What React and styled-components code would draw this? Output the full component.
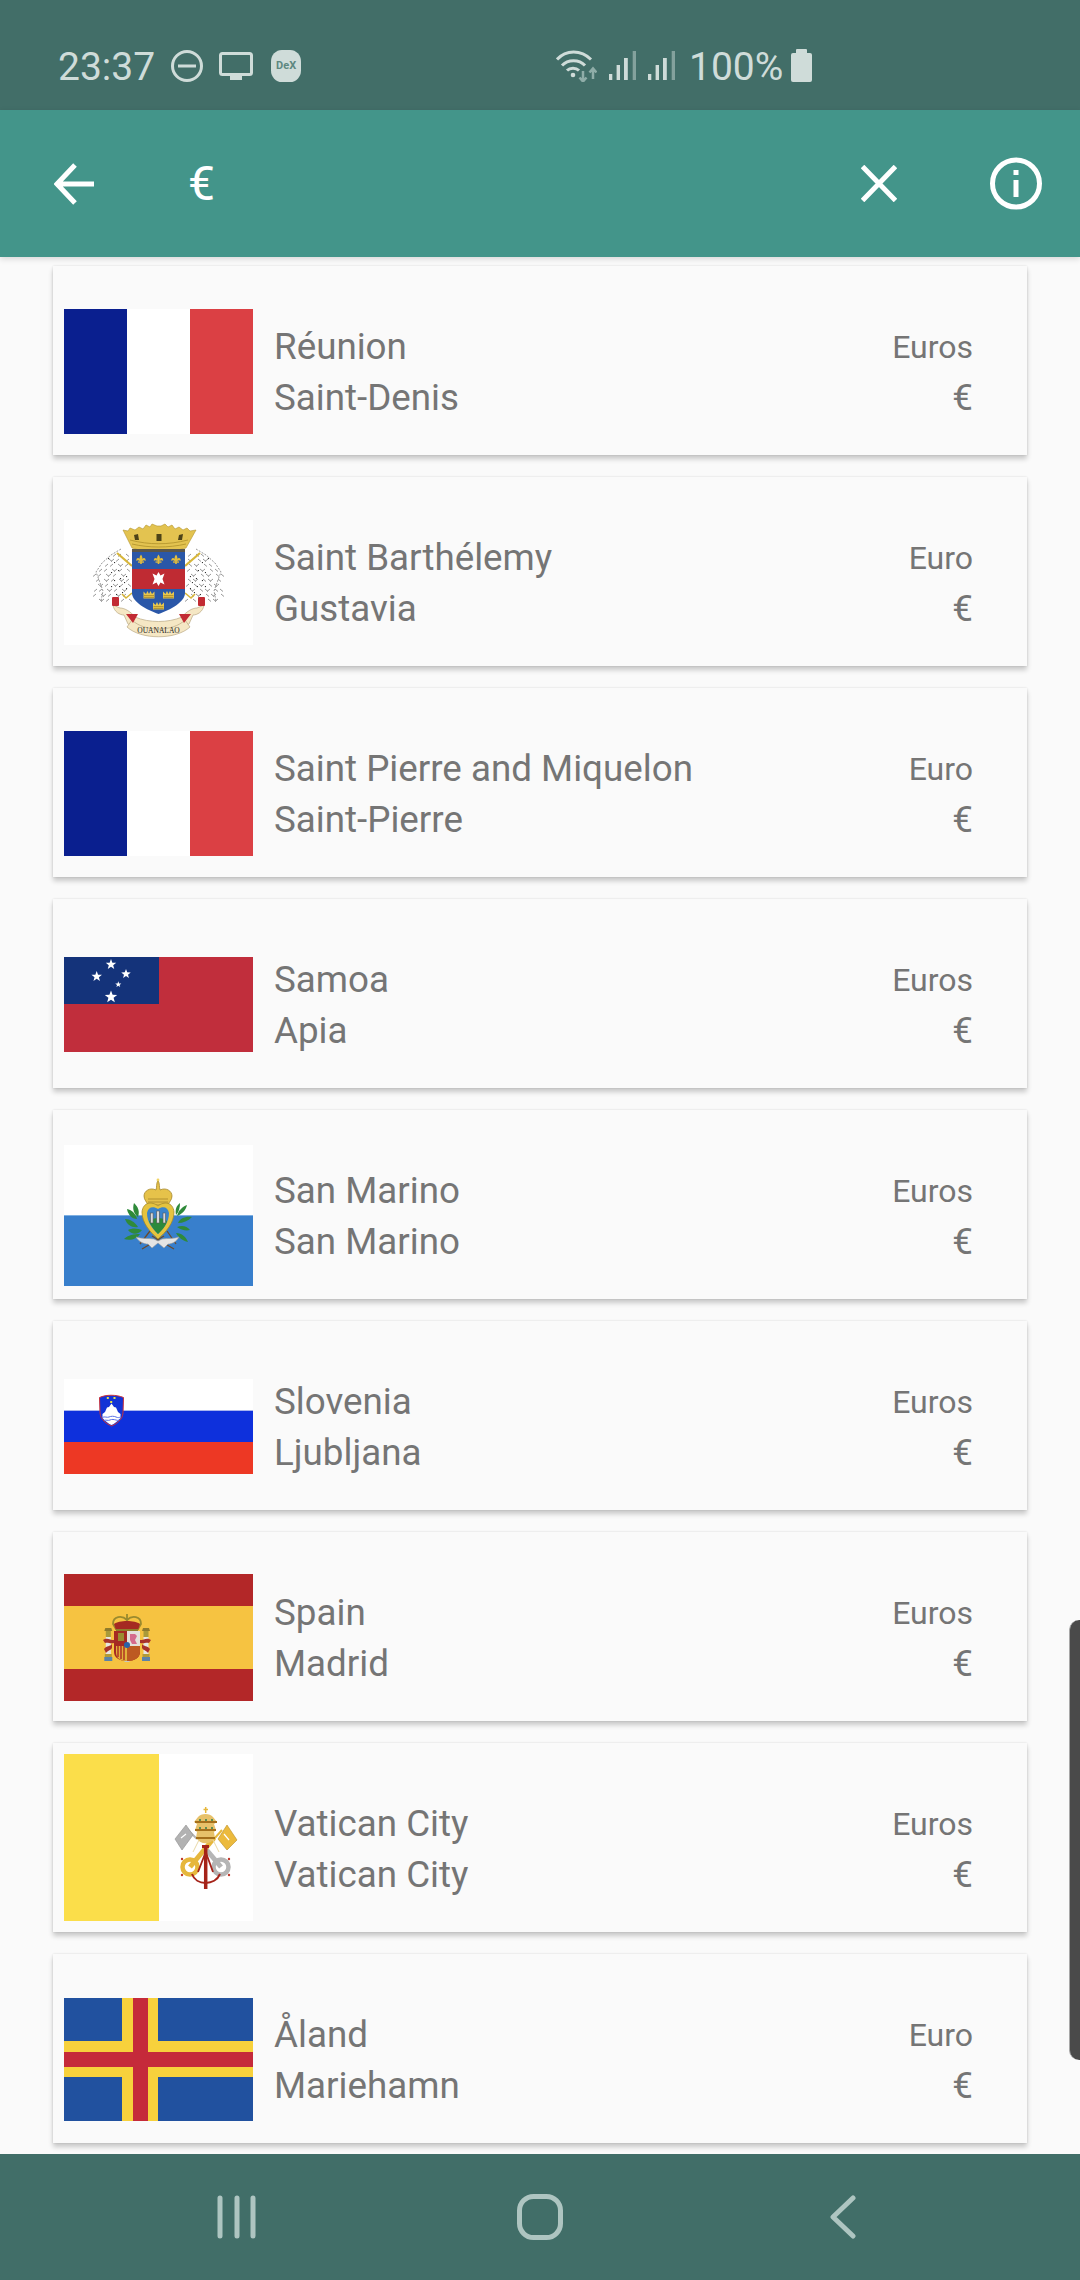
import styled, { createGlobalStyle } from 'styled-components'

const GlobalStyle = createGlobalStyle`
  html, body {
    margin: 0;
    padding: 0;
    background: #fafafa;
  }
  * {
    box-sizing: border-box;
  }
`

const Page = styled.div`
  position: relative;
  width: 1080px;
  height: 2280px;
  display: flex;
  flex-direction: column;
  overflow: hidden;
  background: #fafafa;
  font-family: Roboto, 'Liberation Sans', sans-serif;
`

const StatusBar = styled.div`
  height: 110px;
  flex: none;
  display: grid;
  grid-template-columns: 556px auto;
  align-items: center;
  padding-top: 21px;
  background: #426e68;
  color: #cfdcd9;
`

const StatusLeft = styled.div`
  display: flex;
  align-items: center;
  gap: 16px;
  padding-left: 58px;
`

const StatusRight = styled.div`
  display: flex;
  align-items: center;
  gap: 12px;
`

const StatusText = styled.span`
  font-size: 39px;
  line-height: 44px;
  margin-top: 3px;
`

const Percent = styled(StatusText)`
  margin-left: 2px;
  margin-right: -4px;
`

const DexBadge = styled.div`
  width: 30px;
  height: 32px;
  margin-left: 2px;
  border-radius: 36%;
  display: flex;
  align-items: center;
  justify-content: center;
  background: #cfdcd9;
  color: #5d8880;
  font-size: 11px;
  font-weight: 700;
`

const AppBar = styled.div`
  position: relative;
  z-index: 2;
  height: 147px;
  flex: none;
  display: flex;
  align-items: center;
  padding: 0 38px 0 54px;
  background: #43958a;
  color: #fff;
  box-shadow: 0 2px 6px rgba(0, 0, 0, 0.14);
`

const SearchText = styled.span`
  flex: 1;
  margin-left: 94px;
  font-size: 48px;
  line-height: 54px;
`

const ClearIcon = styled.svg`
  margin-right: 93px;
`

const List = styled.div`
  flex: 1;
  min-height: 0;
  display: flex;
  flex-direction: column;
  gap: 22px;
  padding: 9px 53px 0;
  overflow: hidden;
`

const Card = styled.div`
  flex: none;
  height: 189px;
  display: flex;
  align-items: center;
  padding: 22px 54px 0 11px;
  background: #fafafa;
  box-shadow: 0 4px 5px rgba(0, 0, 0, 0.2), 0 0 2px rgba(0, 0, 0, 0.12);
`

const Flag = styled.svg`
  flex: none;
  display: block;
  margin-top: ${p => (p.$raised ? '-22px' : '0')};
`

const Names = styled.div`
  flex: 1;
  margin-left: 21px;
  font-size: 36.75px;
  line-height: 51px;
  color: #757575;
`

const Money = styled.div`
  text-align: right;
  color: #757575;
`

const CurrencyName = styled.div`
  font-size: 32px;
  line-height: 51px;
  padding-top: 1px;
  margin-bottom: -1px;
`

const CurrencySign = styled.div`
  font-size: 36.75px;
  line-height: 51px;
`

const NavBar = styled.div`
  height: 126px;
  flex: none;
  display: grid;
  grid-template-columns: repeat(3, 303px);
  justify-content: center;
  align-items: center;
  justify-items: center;
  padding-bottom: 1px;
  background: #416e68;
`

const Scrollbar = styled.div`
  position: absolute;
  top: 1620px;
  right: 0;
  width: 11px;
  height: 440px;
  background: #4a4a4a;
  border-left: 1px solid #a8a8a8;
  border-radius: 10px 0 0 10px;
`

const starPoints = (cx, cy, r) => {
  const pts = []
  for (let i = 0; i < 10; i++) {
    const rad = i % 2 === 0 ? r : r * 0.42
    const a = -Math.PI / 2 + (i * Math.PI) / 5
    pts.push(`${cx + rad * Math.cos(a)},${cy + rad * Math.sin(a)}`)
  }
  return pts.join(' ')
}

function France() {
  return (
    <Flag width="189" height="125" viewBox="0 0 189 125">
      <rect width="63" height="125" fill="#0a1f8f" />
      <rect x="63" width="63" height="125" fill="#fff" />
      <rect x="126" width="63" height="125" fill="#db4044" />
    </Flag>
  )
}

function Fleur({ x, y }) {
  return (
    <g transform={`translate(${x} ${y})`} fill="#e3bd3c">
      <path d="M0-5.500C1.800-3 1.800-1 .8 1V4H-.8V1C-1.800-1-1.800-3 0-5.500Z" />
      <path d="M-1-1C-3-3-5-2-4.600 1-3.800 0-2 0-1 1.500ZM1-1C3-3 5-2 4.600 1 3.800 0 2 0 1 1.500Z" />
      <rect x="-3" y="1.400" width="6" height="1.300" />
    </g>
  )
}

function MiniCrown({ x, y }) {
  return (
    <g transform={`translate(${x} ${y})`}>
      <path d="M-5.500-3.500-3-1-1.500-4 0-1 1.500-4 3-1 5.500-3.500V3.500H-5.500Z" fill="#e8c64d" />
      <path d="M-5 .6H5M-5 2.400H5" stroke="#8a6d1c" strokeWidth=".6" />
    </g>
  )
}

// feather ticks for the sketchy birds, scattered inside a wing shaped band
const featherTicks = []
for (let i = 0; i < 70; i++) {
  const row = i % 10
  const col = Math.floor(i / 10)
  const x = 32 + col * 5 + ((row * 7) % 4)
  const y = 34 + row * 5 + ((col * 3) % 3)
  const edge = 58 - (y - 30) * 0.9
  if (x > edge - 6 && x < 66 && y < 82) {
    featherTicks.push([x, y, i % 3 === 0 ? 3 : -3])
  }
}

function Pelican({ flip }) {
  const dots = [[44, 38], [50, 42], [47, 52], [54, 50], [50, 60], [56, 58], [47, 66], [55, 66], [60, 62], [58, 72], [52, 74], [62, 56], [62, 68]]
  return (
    <g transform={flip ? 'matrix(-1 0 0 1 189 0)' : undefined}>
      <g fill="none" stroke="#8c8c8c" strokeWidth=".9">
        {featherTicks.map(([x, y, d]) => (
          <path key={`${x}-${y}`} d={`M${x} ${y}l${d} 2.500`} />
        ))}
        <path d="M57 29 47 35 38 43 32 52 35 60 39 71 37 81" strokeDasharray="2 1.300" />
      </g>
      {dots.map(([x, y]) => (
        <rect key={`${x}-${y}`} x={x} y={y} width="1.100" height="1.100" fill="#333" />
      ))}
      <path d="M53 33 68 46" stroke="#d7b63a" strokeWidth="2.200" />
      <path d="M68 73 62 78 58 74" fill="none" stroke="#d7b63a" strokeWidth="1.600" />
    </g>
  )
}

function SaintBarthelemy() {
  return (
    <Flag width="189" height="125" viewBox="0 0 189 125">
      <rect width="189" height="125" fill="#fff" />
      <Pelican />
      <Pelican flip />
      {/* ribbon */}
      <path d="M49 85C50 92 56 95 60 95L64 104C76 113 113 113 125 104L129 95C133 95 139 92 140 85L133 88C128 88 122 92 118 97 104 103 85 103 71 97 67 92 61 88 56 88Z" fill="#f5e7c4" stroke="#b9a883" strokeWidth=".7" />
      <path d="M68 100C80 112 109 112 121 100L126 107C112 120 77 120 63 107Z" fill="#f5e7c4" stroke="#b9a883" strokeWidth=".7" />
      <path d="M62 94 74 94 69 103ZM127 94 115 94 120 103Z" fill="#c22b33" />
      <rect x="48" y="77" width="7" height="9" rx="1" fill="#c22b33" />
      <rect x="134" y="77" width="7" height="9" rx="1" fill="#c22b33" />
      <text x="94.500" y="113" textAnchor="middle" fontFamily="'Liberation Serif', serif" fontSize="7.500" fill="#222">OUANALAO</text>
      {/* crown */}
      <path d="M59 10 64 11 66 8 71 10 75 7 79 9 82 5 86 7 88 4 93 6 97 6 101 4 104 7 108 5 111 9 115 7 119 10 123 8 126 11 132 10 122 28C105 33 84 33 68 28Z" fill="#e3c350" stroke="#b4952f" strokeWidth=".6" />
      <path d="M68 24C85 28 104 28 122 24M66 20C85 25 104 25 124 20" fill="none" stroke="#a88a24" strokeWidth=".7" />
      <rect x="92.500" y="14" width="5" height="7" fill="#4d4318" />
      <path d="M70 15 74 14 75 20 71 20ZM119 14 115 15 114 20 118 20Z" fill="#4d4318" />
      {/* shield */}
      <path d="M68 30H121V73C121 82 106 90 94.500 94 83 90 68 82 68 73Z" fill="#2a57a8" />
      <rect x="68" y="29" width="53" height="3" fill="#5b5647" />
      <rect x="68" y="49" width="53" height="20" fill="#bf2b33" />
      <Fleur x={77} y={40} />
      <Fleur x={94.5} y={40} />
      <Fleur x={112} y={40} />
      <path d="M94.500 52 96.500 55.500 100.500 53.500 98.500 59 100.500 64.500 96.500 62.500 94.500 66 92.500 62.500 88.500 64.500 90.500 59 88.500 53.500 92.500 55.500Z" fill="#fff" />
      <MiniCrown x={85} y={75} />
      <MiniCrown x={104.5} y={75} />
      <MiniCrown x={94.5} y={86} />
    </Flag>
  )
}

function Samoa() {
  return (
    <Flag width="189" height="95" viewBox="0 0 189 95">
      <rect width="189" height="95" fill="#c12e3c" />
      <rect width="95" height="47" fill="#14337a" />
      <polygon points={starPoints(47, 7.5, 5.5)} fill="#fff" />
      <polygon points={starPoints(32.7, 19.5, 5.5)} fill="#fff" />
      <polygon points={starPoints(62, 17, 5)} fill="#fff" />
      <polygon points={starPoints(54.3, 27.5, 3.2)} fill="#fff" />
      <polygon points={starPoints(47, 40, 6.5)} fill="#fff" />
    </Flag>
  )
}

function SanMarino() {
  return (
    <Flag width="189" height="141" viewBox="0 0 189 141">
      <rect width="189" height="71" fill="#fff" />
      <rect y="70" width="189" height="71" fill="#387fcc" />
      <rect y="70" width="189" height="1" fill="#7fb0e2" />
      {/* branches */}
      <path d="M76 99 86 86M112 99 103 86M78 104 100 91M110 104 88 91" stroke="#6b4a2c" strokeWidth="1.300" fill="none" />
      <g fill="#2f8a3a">
        <path d="M70 58C74 62 76 66 74 72 70 69 68 64 70 58Z" />
        <path d="M63 64C68 65 72 69 73 74 68 74 64 70 63 64Z" />
        <path d="M61 74C66 74 71 77 74 82 68 83 63 80 61 74Z" />
        <path d="M64 85C68 83 73 83 78 85 74 90 68 90 64 85ZM60 94C64 90 70 89 76 89 73 94 66 96 60 94Z" />
        <path d="M116 58C116 62 115 67 112 70 111 65 112 61 116 58Z" />
        <path d="M123 60C122 65 118 69 113 71 114 66 118 62 123 60Z" />
        <path d="M128 72C124 76 119 78 114 78 116 73 122 71 128 72Z" />
        <path d="M126 85C122 86 117 85 113 82 118 80 123 81 126 85ZM124 97C119 96 114 92 112 88 118 88 122 92 124 97Z" />
      </g>
      {/* crown */}
      <path d="M94 35C96 39 95 42 96 45 102 42 108 46 108 51 108 55 105 57 104 60H84C83 57 80 55 80 51 80 46 86 42 92 45 93 42 92 39 94 35Z" fill="#e6c24a" stroke="#a5862c" strokeWidth=".8" />
      <path d="M84 54H104M84 57H104" stroke="#a5862c" strokeWidth=".8" />
      <circle cx="94" cy="35" r="1.400" fill="#f1d463" />
      {/* shield */}
      <path d="M94 61C88 56 79 57 78 67 78 78 86 87 94 94 102 87 110 78 110 67 109 57 100 56 94 61Z" fill="#e5c33f" stroke="#a58a2a" strokeWidth=".8" />
      <path d="M94 64C89 61 84 62 83 68 83 77 88 83 94 89 100 83 105 77 105 68 104 62 99 61 94 64Z" fill="#3a84cc" />
      <path d="M85 76C90 72 98 72 103 76 102 81 98 85 94 89 90 85 87 81 85 76Z" fill="#2c8a3b" />
      <g fill="#d8d8d8" stroke="#555" strokeWidth=".6">
        <rect x="86.500" y="68" width="2.600" height="10" />
        <rect x="92.700" y="66" width="2.600" height="12" />
        <rect x="99" y="68" width="2.600" height="10" />
      </g>
      {/* ribbon */}
      <path d="M72 92C78 94 84 93 90 94L94 96 98 94C104 93 110 94 115 92 112 97 108 99 104 99L100 103 94 98 88 103 84 99C80 99 75 97 72 92Z" fill="#e4e4e4" stroke="#9c9c9c" strokeWidth=".6" />
    </Flag>
  )
}

function Slovenia() {
  return (
    <Flag width="189" height="95" viewBox="0 0 189 95">
      <rect width="189" height="32" fill="#fff" />
      <rect y="31" width="189" height="32" fill="#0e30dc" />
      <rect y="31" width="189" height="1" fill="#a9b5ef" />
      <rect y="63" width="189" height="32" fill="#ed3824" />
      <path d="M35.500 18.500C42 15.500 52 15.500 59.500 18.500L59 34C58.500 41 52 45 47.500 47 43 45 36.500 41 36 34Z" fill="#1233d6" stroke="#c9303a" strokeWidth="1" />
      <path d="M38.500 39V35L41 33 43 28.500 45 28 47.500 24.500 50 28 52 28.500 54 33 56.500 35V39C54 42 50 45 47.500 46 45 45 41 42 38.500 39Z" fill="#fff" />
      <path d="M38 38.500C41 37 43 39 45 38S50 37 52 38 55 38.500 57 38M40 41.500C42 40.500 44 42 46 41S50 40.500 52 41 54 41.500 55 41" fill="none" stroke="#5b73e6" strokeWidth="1" />
      <rect x="42.800" y="18" width="2" height="2" fill="#e6e04a" />
      <rect x="49.500" y="18" width="2" height="2" fill="#e6e04a" />
      <rect x="46.200" y="22" width="2" height="2" fill="#e6e04a" />
    </Flag>
  )
}

function Pillar({ x }) {
  return (
    <g>
      <path d={`M${x - 3} 54h6l1 3h-8Z`} fill="#8f7b2c" />
      <rect x={x - 2.5} y="57" width="5" height="6" fill="#a99a3a" />
      <rect x={x - 2.5} y="63" width="5" height="18" fill="#e6e6e0" />
      <rect x={x - 3.5} y="80" width="7" height="3" fill="#b09a3a" />
      <rect x={x - 4} y="83" width="8" height="4" fill="#5c83a8" />
    </g>
  )
}

function Spain() {
  return (
    <Flag width="189" height="127" viewBox="0 0 189 127">
      <rect width="189" height="127" fill="#b32728" />
      <rect y="32" width="189" height="63" fill="#f6c341" />
      <Pillar x={44.3} />
      <Pillar x={82} />
      <path d="M39 66C43 63 46 66 50 66V69C46 70 44 68 41 69ZM87 66C83 63 80 66 76 66V69C80 70 82 68 85 69Z" fill="#a8332a" />
      <path d="M40 75C43 71 46 73 48 70V74C46 77 44 76 42 79ZM86 75C83 71 80 73 78 70V74C80 77 82 76 84 79Z" fill="#a8332a" />
      {/* crown */}
      <path d="M63 40V47M49 50C49 42 58 41 63 46 68 41 77 42 77 50L74 55H52Z" fill="none" stroke="#9a8a2e" strokeWidth="1.800" />
      <path d="M50 50C55 46 71 46 76 50L74 56H52Z" fill="#a52a22" />
      <path d="M52 56H74" stroke="#8e7f2a" strokeWidth="2" />
      {/* shield */}
      <path d="M50 57H76V78C76 84 70 87 63 87 56 87 50 84 50 78Z" fill="#a52a22" />
      <rect x="63" y="57" width="13" height="15" fill="#e4e0da" />
      <path d="M66 60H71L73 62 71 66 73 70H68L66 66Z" fill="#d46a8c" />
      <path d="M63 72H76V78C76 84 70 87 63 87Z" fill="#bd5a22" />
      <path d="M52 72H63V87C56 87 52 84 52 78Z" fill="#e0b13a" />
      <path d="M54 72V83M57 72V85M60 72V86" stroke="#ad2a22" strokeWidth="1.400" />
      <path d="M54 59H60V67H54Z" fill="#9b8c30" />
      <circle cx="63" cy="71" r="3" fill="#2a62a8" />
      <path d="M61 87H65L66 88H60Z" fill="#c9c9c0" />
    </Flag>
  )
}

function Vatican() {
  return (
    <Flag $raised width="189" height="167" viewBox="0 0 189 167">
      <rect width="189" height="167" fill="#fff" />
      <rect width="95" height="167" fill="#fbde4a" />
      {/* keys */}
      <path d="M157 113 141 94" stroke="#b5b5b5" strokeWidth="5" />
      <path d="M126 113 150 84" stroke="#e6b73c" strokeWidth="5" />
      <path d="M133 85 124 76" stroke="#b5b5b5" strokeWidth="2" />
      <path d="M150 85 158 76" stroke="#e6b73c" strokeWidth="2" />
      <path d="M122 71 129 81 118 96 111 85Z" fill="#b2b2b2" stroke="#8e8e8e" strokeWidth=".6" />
      <path d="M163 71 173 86 163 96 154 85Z" fill="#ecba3d" stroke="#b98f28" strokeWidth=".6" />
      <path d="M117 84 122 80M160 80 165 86" stroke="#fff" strokeWidth="1.200" />
      <circle cx="126" cy="113" r="7.500" fill="none" stroke="#e6b73c" strokeWidth="4.500" />
      <circle cx="157" cy="113" r="7.500" fill="none" stroke="#b5b5b5" strokeWidth="4.500" />
      <g fill="#c0392b">
        <circle cx="118" cy="105" r="1.200" />
        <circle cx="118" cy="121" r="1.200" />
        <circle cx="165" cy="105" r="1.200" />
        <circle cx="165" cy="121" r="1.200" />
      </g>
      {/* cord */}
      <path d="M141.700 94V135" stroke="#a52319" strokeWidth="3.500" />
      <path d="M128 120C132 132 151 132 156 120" fill="none" stroke="#a52319" strokeWidth="2" />
      <path d="M141.700 98 134 118M141.700 98 149 118" stroke="#a52319" strokeWidth="1.800" />
      <rect x="138" y="91" width="7" height="3" fill="#a52319" />
      {/* tiara */}
      <path d="M141.700 53V59M139.500 55.500H144" stroke="#e6b73c" strokeWidth="1.500" />
      <path d="M134 63C137 59 146 59 149 63L153 68 150 70 152 76 150 78 151 84C146 91 137 91 132 84L133 78 131 76 133 70 130 68Z" fill="#e7c16a" />
      <path d="M131 68H153M131 76H152M132 84H151" stroke="#a5701c" strokeWidth="2" />
      <g fill="#2f7d4f">
        <circle cx="136" cy="66" r="1" />
        <circle cx="142" cy="66" r="1" />
        <circle cx="148" cy="66" r="1" />
        <circle cx="136" cy="74" r="1" />
        <circle cx="142" cy="74" r="1" />
        <circle cx="148" cy="74" r="1" />
      </g>
      <path d="M135 86 129 98M149 86 155 98" stroke="#e9d9a8" strokeWidth="1" />
    </Flag>
  )
}

function Aland() {
  return (
    <Flag width="189" height="123" viewBox="0 0 189 123">
      <rect width="189" height="123" fill="#21519f" />
      <rect x="58" width="36" height="123" fill="#f7d13c" />
      <rect y="43" width="189" height="36" fill="#f7d13c" />
      <rect x="69" width="15" height="123" fill="#c52a3a" />
      <rect y="54" width="189" height="15" fill="#c52a3a" />
    </Flag>
  )
}

const countries = [
  { name: 'Réunion', capital: 'Saint-Denis', currency: 'Euros', FlagArt: France },
  { name: 'Saint Barthélemy', capital: 'Gustavia', currency: 'Euro', FlagArt: SaintBarthelemy },
  { name: 'Saint Pierre and Miquelon', capital: 'Saint-Pierre', currency: 'Euro', FlagArt: France },
  { name: 'Samoa', capital: 'Apia', currency: 'Euros', FlagArt: Samoa },
  { name: 'San Marino', capital: 'San Marino', currency: 'Euros', FlagArt: SanMarino },
  { name: 'Slovenia', capital: 'Ljubljana', currency: 'Euros', FlagArt: Slovenia },
  { name: 'Spain', capital: 'Madrid', currency: 'Euros', FlagArt: Spain },
  { name: 'Vatican City', capital: 'Vatican City', currency: 'Euros', FlagArt: Vatican },
  { name: 'Åland', capital: 'Mariehamn', currency: 'Euro', FlagArt: Aland },
]

function SignalIcon() {
  return (
    <svg width="27" height="29" viewBox="0 0 27 29" fill="#cfdcd9">
      <rect y="23" width="3.300" height="6" />
      <rect x="7.600" y="14" width="3.400" height="15" />
      <rect x="15" y="7" width="3.800" height="22" />
      <rect x="23.700" width="3.300" height="29" fill="#84a29d" />
    </svg>
  )
}

export default function App() {
  return (
    <Page>
      <GlobalStyle />
      <StatusBar>
        <StatusLeft>
          <StatusText>23:37</StatusText>
          <svg width="32" height="32" viewBox="0 0 32 32" fill="none" stroke="#cfdcd9" strokeWidth="3">
            <circle cx="16" cy="16" r="14.500" />
            <path d="M7 16H25" />
          </svg>
          <svg width="34" height="28" viewBox="0 0 34 28" fill="none">
            <rect x="1.500" y="1.500" width="31" height="21" rx="2" stroke="#cfdcd9" strokeWidth="3" />
            <rect x="11" y="23" width="12" height="5" fill="#cfdcd9" />
          </svg>
          <DexBadge>DeX</DexBadge>
        </StatusLeft>
        <StatusRight>
          <svg width="41" height="32" viewBox="0 0 41 32" fill="none">
            <g stroke="#cfdcd9" strokeWidth="3">
              <path d="M1 9.500C10-.5 25-.5 35 9.500" />
              <path d="M6 15.500C12 9 23 9 29 15.500" />
              <path d="M11 20.500C14 17.500 20 17.500 23 20.500" />
            </g>
            <circle cx="17" cy="25" r="2.300" fill="#cfdcd9" />
            <path d="M27 21V31M23.500 27.500 27 31.500 30.500 27.500M37 29V19M33.500 22.500 37 18.500 40.500 22.500" stroke="#8fada8" strokeWidth="2.500" />
          </svg>
          <SignalIcon />
          <SignalIcon />
          <Percent>100%</Percent>
          <svg width="21" height="33" viewBox="0 0 21 33" fill="#cfdcd9">
            <rect x="5" width="11" height="6" rx="1" />
            <rect y="4" width="21" height="29" rx="2" />
          </svg>
        </StatusRight>
      </StatusBar>

      <AppBar>
        <svg width="40" height="42" viewBox="0 0 40 42" fill="none" stroke="#fff" strokeWidth="5">
          <path d="M3 21H40M21 2 3 21 21 40" />
        </svg>
        <SearchText>€</SearchText>
        <ClearIcon width="36" height="37" viewBox="0 0 36 37" fill="none" stroke="#fff" strokeWidth="5">
          <path d="M1.500 1.500 34.500 35.500M34.500 1.500 1.500 35.500" />
        </ClearIcon>
        <svg width="52" height="53" viewBox="0 0 52 53" fill="none">
          <circle cx="26" cy="26.500" r="23.500" stroke="#fff" strokeWidth="5" />
          <rect x="23.500" y="23" width="5" height="17" fill="#fff" />
          <rect x="23.500" y="13" width="5" height="5" fill="#fff" />
        </svg>
      </AppBar>

      <List>
        {countries.map(({ name, capital, currency, FlagArt }) => (
          <Card key={name}>
            <FlagArt />
            <Names>
              <div>{name}</div>
              <div>{capital}</div>
            </Names>
            <Money>
              <CurrencyName>{currency}</CurrencyName>
              <CurrencySign>€</CurrencySign>
            </Money>
          </Card>
        ))}
      </List>

      <NavBar>
        <svg width="42" height="44" viewBox="0 0 42 44" fill="none" stroke="#aec5c1" strokeWidth="5" strokeLinecap="round">
          <path d="M4 3V41M21 3V41M37 3V41" />
        </svg>
        <svg width="46" height="46" viewBox="0 0 46 46" fill="none" stroke="#aec5c1" strokeWidth="5">
          <rect x="2.500" y="2.500" width="41" height="41" rx="14" />
        </svg>
        <svg width="26" height="44" viewBox="0 0 26 44" fill="none" stroke="#aec5c1" strokeWidth="5" strokeLinecap="round" strokeLinejoin="round">
          <path d="M23 3 3 22 23 41" />
        </svg>
      </NavBar>

      <Scrollbar />
    </Page>
  )
}
